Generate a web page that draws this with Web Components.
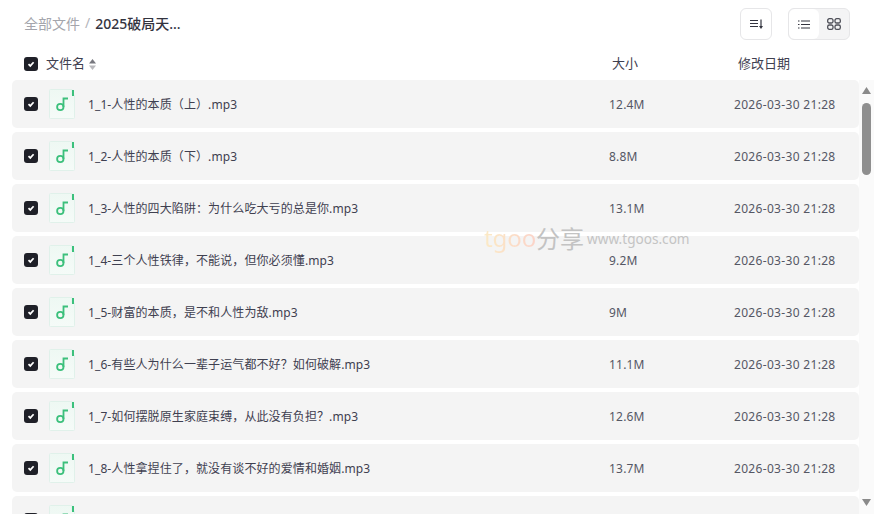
<!DOCTYPE html>
<html lang="zh">
<head>
<meta charset="utf-8">
<title>文件列表</title>
<style>
  html, body { margin: 0; height: 100%; overflow: hidden; background: #fff; }
  body { font-family: "Noto Sans", "Noto Sans CJK SC", sans-serif; color: #3d3d4a; }
</style>
</head>
<body>
<file-browser></file-browser>

<script>
class FileCheck extends HTMLElement {
    constructor() {
        super();
        this.attachShadow({ mode: 'open' });
        this.shadowRoot.innerHTML = `
      <style>
        :host { display: block; width: 14px; height: 14px; line-height: 0; flex: none; }
      </style>
      <svg width="14" height="14" viewBox="0 0 14 14"><rect width="14" height="14" rx="3" fill="#1f2028"/><path d="M4.500 7.100 6.300 8.900 9.600 5.200" fill="none" stroke="#fff" stroke-width="1.700"/></svg>`;
    }
}

class FileRow extends HTMLElement {
    constructor() {
        super();
        this.attachShadow({ mode: 'open' });
    }

    connectedCallback() {
        const name = this.getAttribute('name');
        const size = this.getAttribute('size');
        // the last row is cut by the window, only its box and icon show
        const texts = name ? `
      <span class="name">${name}</span>
      <span class="size">${size}</span>
      <span class="date">2026-03-30 21:28</span>` : '';
        this.shadowRoot.innerHTML = `
      <style>
        :host {
            display: grid;
            grid-template-columns: 14px 26px 1fr 125px 125px;
            align-items: center;
            flex: none;
            height: 48px;
            padding-left: 12px;
            background: #f4f4f4;
            border-radius: 5px;
            font-size: 12px;
            color: #3f4050;
        }
        .icon { margin-left: 11px; width: 26px; height: 30px; line-height: 0; }
        .name { margin-left: 24px; white-space: nowrap; letter-spacing: .1px; }
        .size { color: #555764; letter-spacing: .2px; }
        .date { color: #555764; white-space: nowrap; letter-spacing: .32px; }
      </style>
      <file-check></file-check>
      <svg class="icon" viewBox="0 0 26 30">
        <defs>
          <linearGradient id="paper" x1="0" y1="0" x2="0" y2="1">
            <stop offset="0" stop-color="#eef8f3"/><stop offset="1" stop-color="#f5fbf8"/>
          </linearGradient>
        </defs>
        <path d="M.5 1.500a1 1 0 0 1 1-1H23V6h2.500V28.500a1 1 0 0 1-1 1H1.500a1 1 0 0 1-1-1Z" fill="url(#paper)" stroke="#e0f1ea"/>
        <rect x="23" y="1" width="2" height="6" fill="#3cc07c"/>
        <path d="M19 9.500h-4.500V18" fill="none" stroke="#3cc07c" stroke-width="1.800"/>
        <circle cx="11.300" cy="18" r="3.200" fill="none" stroke="#3cc07c" stroke-width="1.800"/>
      </svg>${texts}`;
    }
}

class ToolBar extends HTMLElement {
    constructor() {
        super();
        this.attachShadow({ mode: 'open' });
        this.shadowRoot.innerHTML = `
      <style>
        :host {
            display: flex;
            align-items: center;
            height: 48px;
            padding: 0 24px;
            font-size: 14px;
        }
        .crumb { display: flex; padding-bottom: 2px; }
        .root { color: #a4a5ac; }
        .sep { color: #b4b5bb; margin: 0 5px; }
        .current { color: #33343f; font-weight: 500; }
        .tools { margin-left: auto; display: flex; gap: 16px; }
        .btn {
            box-sizing: border-box;
            width: 32px;
            height: 32px;
            border: 1px solid #e6e6e8;
            border-radius: 6px;
            display: flex;
            align-items: center;
            justify-content: center;
        }
        .switch {
            box-sizing: border-box;
            display: flex;
            width: 62px;
            height: 32px;
            border: 1px solid #e6e6e8;
            border-radius: 6px;
            background: #f4f4f5;
            overflow: hidden;
        }
        .switch span { flex: 1; display: flex; align-items: center; justify-content: center; }
        .switch .on { background: #fff; border-radius: 6px; }
      </style>
      <div class="crumb"><span class="root">全部文件</span><span class="sep">/</span><span class="current">2025破局天...</span></div>
      <div class="tools">
        <div class="btn">
          <svg width="13" height="10" viewBox="0 0 13 10" fill="none" stroke="#33343f" stroke-width="1.200"><path d="M0 1.500h8M0 4.500h8M0 7.500h8M11 .5v7"/><path d="M9 7h4L11 10Z" fill="#33343f" stroke="none"/></svg>
        </div>
        <div class="switch">
          <span class="on">
            <svg width="12" height="9" viewBox="0 0 12 9" fill="none" stroke="#33343f" stroke-width="1.100"><path d="M0 1h1.500M3 1h9M0 4.500h1.500M3 4.500h9M0 8h1.500M3 8h9"/></svg>
          </span>
          <span>
            <svg width="14" height="12" viewBox="0 0 14 12" fill="none" stroke="#4e4f58" stroke-width="1.300"><rect x=".7" y=".7" width="5.300" height="4.300" rx="1.600"/><rect x="8" y=".7" width="5.300" height="4.300" rx="1.600"/><rect x=".7" y="7" width="5.300" height="4.300" rx="1.600"/><rect x="8" y="7" width="5.300" height="4.300" rx="1.600"/></svg>
          </span>
        </div>
      </div>`;
    }
}

class ListHead extends HTMLElement {
    constructor() {
        super();
        this.attachShadow({ mode: 'open' });
        this.shadowRoot.innerHTML = `
      <style>
        :host {
            display: grid;
            grid-template-columns: 14px 1fr 126px 136px;
            align-items: center;
            height: 32px;
            padding-left: 24px;
            font-size: 13px;
            color: #3f4050;
        }
        span { padding-bottom: 3px; }
        .name { margin-left: 8px; display: flex; align-items: center; gap: 4px; }
      </style>
      <file-check></file-check>
      <span class="name">文件名
        <svg width="7" height="11" viewBox="0 0 7 11" style="margin-top:3px"><path d="M3.500 0 7 4.500H0Z" fill="#77787f"/><path d="M3.500 11 0 6.500h7Z" fill="#b8b8bc"/></svg>
      </span>
      <span>大小</span>
      <span>修改日期</span>`;
    }
}

class FakeScrollbar extends HTMLElement {
    constructor() {
        super();
        this.attachShadow({ mode: 'open' });
        this.shadowRoot.innerHTML = `
      <style>
        :host {
            display: flex;
            flex-direction: column;
            align-items: center;
            flex: none;
            width: 15px;
            background: #fafafa;
        }
        .track { flex: 1; width: 100%; padding-top: 7px; box-sizing: border-box; }
        .thumb { width: 9px; height: 72px; margin: 0 auto; border-radius: 5px; background: #8f8f8f; }
        svg { flex: none; }
      </style>
      <svg width="11" height="16" viewBox="0 0 11 16"><path d="M5.500 8 10 15H1Z" fill="#8a8a8a" transform="translate(0 -1)"/></svg>
      <div class="track"><div class="thumb"></div></div>
      <svg width="11" height="16" viewBox="0 0 11 16"><path d="M1 1h9L5.500 8Z" fill="#8a8a8a"/></svg>`;
    }
}

class WaterMark extends HTMLElement {
    constructor() {
        super();
        this.attachShadow({ mode: 'open' });
        this.shadowRoot.innerHTML = `
      <style>
        :host {
            position: absolute;
            left: 484px;
            top: 219px;
            display: flex;
            align-items: center;
            height: 36px;
            white-space: nowrap;
            pointer-events: none;
        }
        .logo {
            font: 24px "Noto Sans", sans-serif;
            letter-spacing: -.1px;
            background: linear-gradient(90deg, #fbeac6, #fbd3c8);
            -webkit-background-clip: text;
            background-clip: text;
            color: transparent;
        }
        .cn { font: 24px "Noto Sans CJK SC", sans-serif; color: #c3c3c3; }
        .url { font: 13.600px "Noto Sans", sans-serif; color: #c4c4c4; margin-left: 3px; margin-top: 2px; }
      </style>
      <span class="logo">tgoo</span><span class="cn">分享</span><span class="url">www.tgoos.com</span>`;
    }
}

class FileBrowser extends HTMLElement {
    constructor() {
        super();
        this.attachShadow({ mode: 'open' });
        const rows = [
            ['1_1-人性的本质（上）.mp3', '12.4M'],
            ['1_2-人性的本质（下）.mp3', '8.8M'],
            ['1_3-人性的四大陷阱：为什么吃大亏的总是你.mp3', '13.1M'],
            ['1_4-三个人性铁律，不能说，但你必须懂.mp3', '9.2M'],
            ['1_5-财富的本质，是不和人性为敌.mp3', '9M'],
            ['1_6-有些人为什么一辈子运气都不好？如何破解.mp3', '11.1M'],
            ['1_7-如何摆脱原生家庭束缚，从此没有负担？.mp3', '12.6M'],
            ['1_8-人性拿捏住了，就没有谈不好的爱情和婚姻.mp3', '13.7M'],
            ['', ''],
        ];
        this.shadowRoot.innerHTML = `
      <style>
        :host { display: flex; flex-direction: column; height: 514px; position: relative; overflow: hidden; }
        .body { flex: 1; min-height: 0; display: flex; }
        .rows {
            flex: 1;
            min-width: 0;
            display: flex;
            flex-direction: column;
            gap: 4px;
            padding-left: 12px;
            overflow: hidden;
        }
      </style>
      <tool-bar></tool-bar>
      <list-head></list-head>
      <div class="body">
        <div class="rows"></div>
        <fake-scrollbar></fake-scrollbar>
      </div>
      <water-mark></water-mark>`;
        const list = this.shadowRoot.querySelector('.rows');
        rows.forEach(([name, size]) => {
            const row = document.createElement('file-row');
            row.setAttribute('name', name);
            row.setAttribute('size', size);
            list.appendChild(row);
        });
    }
}

customElements.define('file-check', FileCheck);
customElements.define('file-row', FileRow);
customElements.define('tool-bar', ToolBar);
customElements.define('list-head', ListHead);
customElements.define('fake-scrollbar', FakeScrollbar);
customElements.define('water-mark', WaterMark);
customElements.define('file-browser', FileBrowser);
</script>
</body>
</html>
